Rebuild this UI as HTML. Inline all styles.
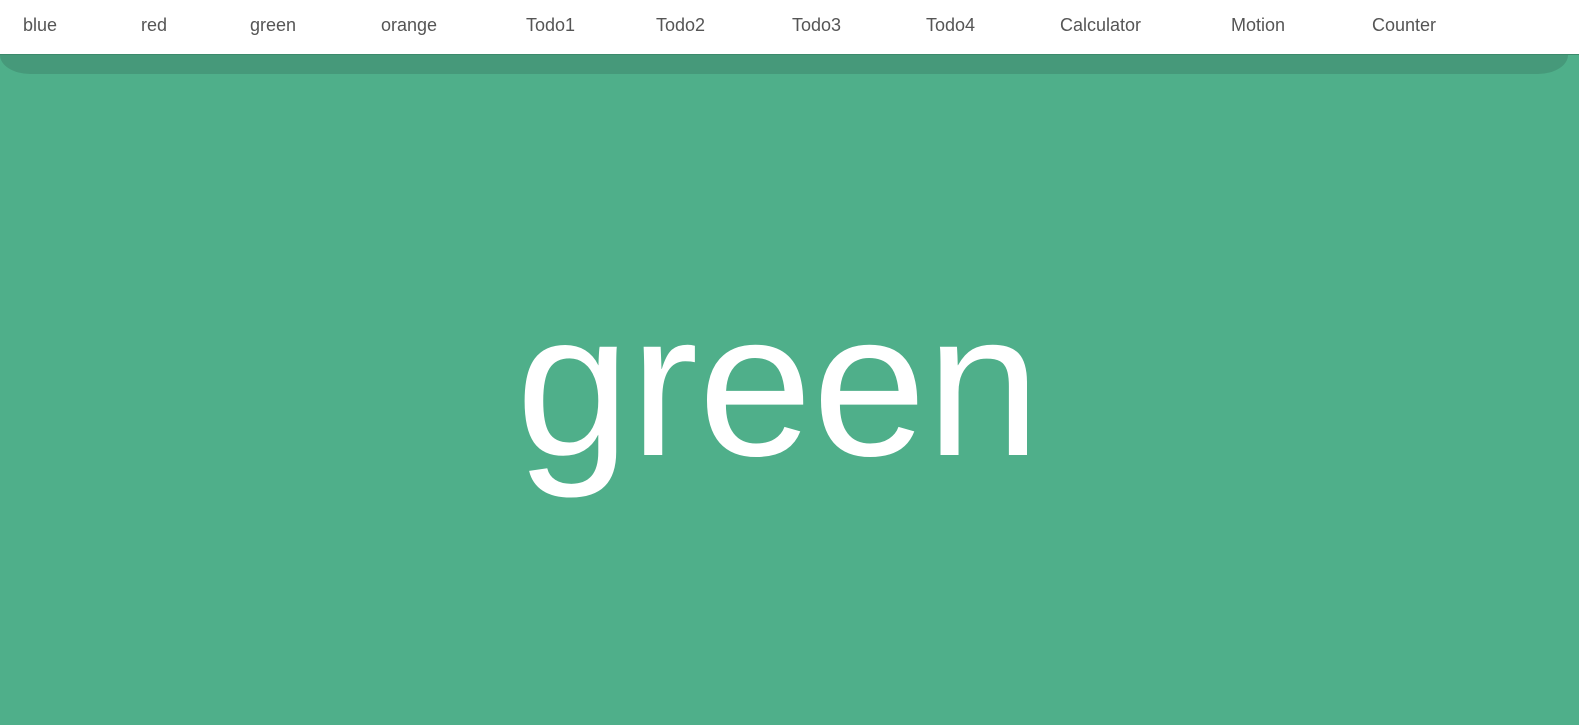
<!DOCTYPE html>
<html><head><style>
body{margin:0;width:1579px;height:725px;overflow:hidden;background:#4faf8a;font-family:"Liberation Sans",sans-serif;position:relative}
nav{position:absolute;top:0;left:0;width:1579px;height:54px;background:#fff;border-bottom:1px solid #3d8a6c}
nav span{position:absolute;top:15px;font-size:18px;color:#555;}
.band{position:absolute;top:55px;left:0;width:1568px;height:19px;background:#46997a;border-radius:0 0 30px 30px/0 0 19px 19px}
.big{position:absolute;left:516px;top:282px;font-size:205px;color:#fff;line-height:1}
</style></head><body>
<nav>
<span style="left:23px">blue</span>
<span style="left:141px">red</span>
<span style="left:250px">green</span>
<span style="left:381px">orange</span>
<span style="left:526px">Todo1</span>
<span style="left:656px">Todo2</span>
<span style="left:792px">Todo3</span>
<span style="left:926px">Todo4</span>
<span style="left:1060px">Calculator</span>
<span style="left:1231px">Motion</span>
<span style="left:1372px">Counter</span>
</nav>
<div class="band"></div>
<div class="big">green</div>
</body></html>
